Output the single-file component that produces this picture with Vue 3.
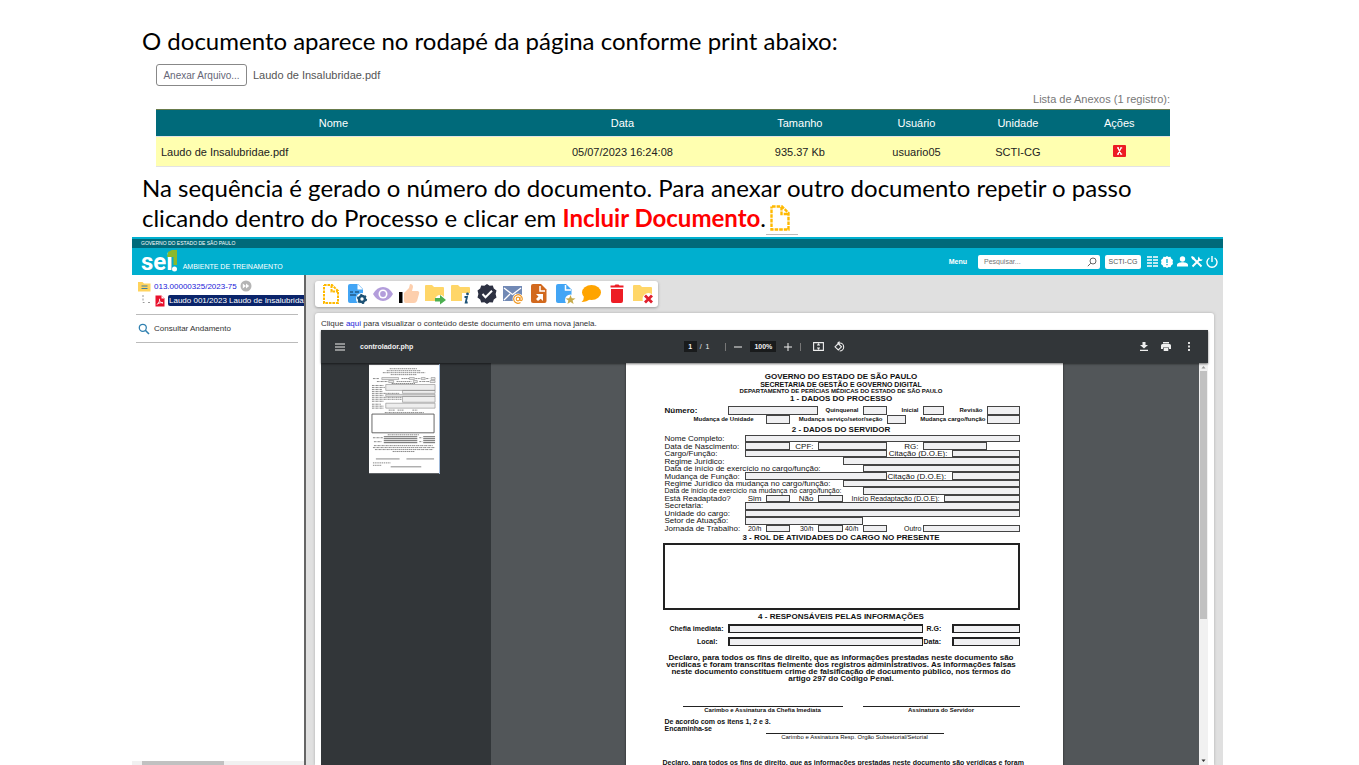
<script setup>
const columns = ['Nome', 'Data', 'Tamanho', 'Usuário', 'Unidade', 'Ações']

// Form cells: l = label, f = field; from/to are grid lines of the form sheet
const l = (text, from, to, cls = '') => ({ kind: 'l', text, from, to, cls })
const f = (name, from, to) => ({ kind: 'f', name, from, to })

const processRows = [
  [l('Número:', 1, 2, 'big'), f('Número', 2, 6), l('Quinquenal', 6, 8, 'end'), f('Quinquenal', 8, 9), l('Inicial', 9, 11, 'end'), f('Inicial', 11, 12), l('Revisão', 13, 14, 'end'), f('Revisão', 14, 15)],
  [l('Mudança de Unidade', 1, 4, 'end far'), f('Mudança de Unidade', 4, 5), l('Mudança serviço/setor/seção', 5, 9, 'end'), f('Mudança serviço/setor/seção', 9, 10), l('Mudança cargo/função', 10, 14, 'end tight'), f('Mudança cargo/função', 14, 15)],
]

const serverRows = [
  [l('Nome Completo:', 1, 3), f('Nome Completo', 3, 15)],
  [l('Data de Nascimento:', 1, 3), f('Data de Nascimento', 3, 5), l('CPF:', 5, 6, 'end'), f('CPF', 6, 9), l('RG:', 9, 11, 'end'), f('RG', 11, 14)],
  [l('Cargo/Função:', 1, 3), f('Cargo/Função', 3, 9), l('Citação (D.O.E):', 9, 13, 'end'), f('Citação do cargo', 13, 15)],
  [l('Regime Jurídico:', 1, 7), f('Regime Jurídico', 7, 15)],
  [l('Data de início de exercício no cargo/função:', 1, 8), f('Data de início de exercício', 8, 15)],
  [l('Mudança de Função:', 1, 3), f('Mudança de Função', 3, 9), l('Citação (D.O.E):', 9, 13, 'tight'), f('Citação da mudança', 13, 15)],
  [l('Regime Jurídico da mudança no cargo/função:', 1, 7), f('Regime Jurídico da mudança', 7, 15)],
  [l('Data de início de exercício na mudança no cargo/função:', 1, 8, 'small'), f('Data de início na mudança', 8, 15)],
  [l('Está Readaptado?', 1, 3), l('Sim', 3, 4, 'end'), f('Sim', 4, 5), l('Não', 5, 6, 'end'), f('Não', 6, 7), l('Início Readaptação (D.O.E):', 8, 12, 'end small'), f('Início Readaptação', 12, 15)],
  [l('Secretaria:', 1, 3), f('Secretaria', 3, 15)],
  [l('Unidade do cargo:', 1, 3), f('Unidade do cargo', 3, 15)],
  [l('Setor de Atuação:', 1, 3), f('Setor de Atuação', 3, 8)],
  [l('Jornada de Trabalho:', 1, 3), l('20/h', 3, 4, 'end small'), f('20 horas', 4, 5), l('30/h', 5, 6, 'end small'), f('30 horas', 6, 7), l('40/h', 7, 8, 'end small'), f('40 horas', 8, 9), l('Outro', 9, 11, 'end small tight'), f('Outro', 11, 15)],
]

const contactRows = [
  [l('Chefia imediata:', 1, 2, 'end'), f('Chefia imediata', 2, 11), l('R.G:', 11, 13, 'near'), f('R.G', 13, 15)],
  [l('Local:', 1, 2, 'end out'), f('Local', 2, 11), l('Data:', 11, 13, 'tight'), f('Data', 13, 15)],
]

const idOf = (group, row, cells, i) => {
  const cell = cells[i]
  const target = cell.kind === 'l' ? i + 1 : i
  return `${group}-${row}-${target}`
}
const span = (c) => ({ gridColumn: `${c.from} / ${c.to}` })

const groups = {
  process: processRows,
  server: serverRows,
  contact: contactRows,
}

// Text lines of the page thumbnail: x, y, length
const textLines = [
  [21, 4, 28], [18, 6, 34], [14, 8, 43], [22, 10, 26],
  [4, 14, 6], [33, 14, 8], [47, 14, 5], [58, 14, 3],
  [8, 17, 11], [28, 17, 15], [51, 17, 10], [23, 19, 24],
  [5, 82, 60], [4, 84, 63], [6, 86, 59], [24, 88, 22],
]
</script>

<template>
  <main class="slide">
    <p class="lead">O documento aparece no rodapé da página conforme print abaixo:</p>

    <section class="attachments">
      <div class="upload">
        <button type="button" class="attach">Anexar Arquivo...</button>
        <span>Laudo de Insalubridae.pdf</span>
      </div>
      <table>
        <caption>Lista de Anexos (1 registro):</caption>
        <thead>
          <tr><th v-for="c in columns" :key="c" scope="col">{{ c }}</th></tr>
        </thead>
        <tbody>
          <tr>
            <td>Laudo de Insalubridae.pdf</td>
            <td>05/07/2023 16:24:08</td>
            <td>935.37 Kb</td>
            <td>usuario05</td>
            <td>SCTI-CG</td>
            <td><button type="button" class="remove" aria-label="Remover anexo">
              <svg width="13" height="12" viewBox="0 0 13 12"><rect width="13" height="12" rx="1" fill="#ed1c24" /><path d="M4 2.800h2M7.200 2.800h2M4 9.200h2M7.200 9.200h2M5 3l3 6M8 3L5 9" stroke="#fff" stroke-width="1.200" fill="none" /></svg>
            </button></td>
          </tr>
        </tbody>
      </table>
    </section>

    <p class="lead second">Na sequência é gerado o número do documento. Para anexar outro documento repetir o passo<br>clicando dentro do Processo e clicar em <strong>Incluir Documento</strong>.<span class="inline-icon"><svg width="20" height="26" viewBox="0 0 20 26"><path d="M2 1.500h10l6.500 6.500v16.500H1.500V1.500M11.500 2v7h7" fill="none" stroke="#ffb900" stroke-width="2.400" stroke-dasharray="3.600 1" /></svg></span></p>

    <section class="app">
      <div class="gov">GOVERNO DO ESTADO DE SÃO PAULO</div>
      <header class="bar">
        <div class="logo">sei<svg width="10" height="24" viewBox="0 0 10 24"><path d="M1 3l2-1 2-1h5v15H6.500V8H0z" fill="#8bb82b" /><circle cx="7.500" cy="20" r="2.500" fill="#fff" /></svg></div>
        <span class="env">AMBIENTE DE TREINAMENTO</span>
        <nav class="tools">
          <a href="#" class="menu">Menu</a>
          <div class="search">
            <input type="search" placeholder="Pesquisar..." aria-label="Pesquisar">
            <svg width="10" height="10" viewBox="0 0 10 10"><circle cx="6" cy="4" r="3" fill="none" stroke="#666" /><path d="M3.800 6.200L.800 9.200" stroke="#666" /></svg>
          </div>
          <button type="button" class="unit">SCTI-CG</button>
          <button type="button" class="ico" aria-label="Painel"><svg width="11" height="11" viewBox="0 0 11 11"><path d="M0 1h5M6 1h5M0 4h5M6 4h5M0 7h5M6 7h5M0 10h5M6 10h5" stroke="#fff" stroke-width="1.300" /></svg></button>
          <button type="button" class="ico" aria-label="Novidades"><svg width="12" height="12" viewBox="0 0 12 12"><path d="M6 0l1.600 1 1.900-.2.700 1.800L12 4l-.4 2 .4 2-1.800 1.400-.7 1.800-1.900-.2L6 12l-1.600-1-1.900.2-.7-1.800L0 8l.4-2L0 4l1.800-1.400L2.500.8l1.900.2z" fill="#fff" /><path d="M6 3v4M6 8v1.200" stroke="#00afcf" stroke-width="1.300" /></svg></button>
          <button type="button" class="ico" aria-label="Usuário"><svg width="11" height="11" viewBox="0 0 11 11"><circle cx="5.500" cy="3" r="2.700" fill="#fff" /><path d="M0 10.500V9c0-2 3-2.800 5.500-2.800S11 7 11 9v1.500z" fill="#fff" /></svg></button>
          <button type="button" class="ico" aria-label="Configurações"><svg width="12" height="12" viewBox="0 0 12 12"><path d="M1.500 1.500L10.500 10.500M1.500 10.500L9 3" fill="none" stroke="#fff" stroke-width="1.900" /><path d="M0 1l1-1 2.500 1.500v2h-2zM8 .600c-1.300 1-1.200 2.300-.7 3.300L8.300 5c1.300.3 3 0 3.200-1.800L9.700 3.600 8.600 2.400z" fill="#fff" /></svg></button>
          <button type="button" class="ico" aria-label="Sair"><svg width="12" height="12" viewBox="0 0 12 12"><path d="M3.400 2a5 5 0 1 0 5.200 0M6 0v6" fill="none" stroke="#fff" stroke-width="1.400" /></svg></button>
        </nav>
      </header>

      <div class="body">
        <aside class="tree">
          <div class="node">
            <svg width="13" height="11" viewBox="0 0 13 11"><path d="M0 1h4.500l1.500 1.500h6.500V10.500H0z" fill="#ffd35c" /><path d="M3.500 5h6M3.500 7.500h6" stroke="#3f7f9f" stroke-width="1.200" /></svg>
            <a href="#">013.00000325/2023-75</a>
            <svg width="12" height="12" viewBox="0 0 12 12"><circle cx="6" cy="6" r="5.500" fill="#b5b5b5" /><path d="M2.800 3.500L6 6 2.800 8.500zM6 3.500L9.200 6 6 8.500z" fill="#fff" /></svg>
          </div>
          <div class="node child">
            <svg width="10" height="12" viewBox="0 0 10 12"><path d="M1 0v7.500h2M6 7.500h3" fill="none" stroke="#999" stroke-dasharray="2 1.500" /></svg>
            <svg width="10" height="12" viewBox="0 0 10 12"><path d="M.5.500h6L9.500 3.500v8H.5z" fill="#e8112d" /><path d="M6.500.500v3h3z" fill="#fff" /><path d="M2 9.500C4 8 5 5.500 4.500 3.800M4.600 5.500C5.200 7 6.500 8 8 8M2.500 9C4 7.800 6 7.400 8 7.800" fill="none" stroke="#fff" stroke-width=".9" /></svg>
            <a href="#" class="selected">Laudo 001/2023 Laudo de Insalubrida</a>
          </div>
          <a href="#" class="history">
            <svg width="12" height="12" viewBox="0 0 12 12"><circle cx="4.800" cy="4.800" r="3.500" fill="none" stroke="#3080b0" stroke-width="1.300" /><path d="M7.300 7.300L11 11" stroke="#3080b0" stroke-width="1.600" /></svg>
            Consultar Andamento
          </a>
          <div class="hscroll"><span></span></div>
        </aside>

        <div class="content">
          <div class="actions">
            <button type="button" aria-label="Incluir Documento"><svg viewBox="0 0 20 20"><path d="M3 1h8l6 6v12H3V1M10.500 1.500V7.500H17" fill="none" stroke="#ffb900" stroke-width="2" stroke-dasharray="2.600 .9" /></svg></button>
            <button type="button" aria-label="Alterar Documento"><svg viewBox="0 0 20 20"><path d="M1 2q0-2 2-2h8l5 5v14H3q-2 0-2-2z" fill="#42a5f5" /><path d="M10.500 0v5.500H16z" fill="#fff" /><path d="M3 8h3M8 8h4M3 11h6" stroke="#225b88" stroke-width="1.300" /><circle cx="15" cy="15" r="6" fill="#fff" /><circle cx="15" cy="15" r="3" fill="none" stroke="#1d5275" stroke-width="2.600" /><circle cx="15" cy="15" r="4.300" fill="none" stroke="#1d5275" stroke-width="1.600" stroke-dasharray="2 2.500" /></svg></button>
            <button type="button" aria-label="Acompanhamento"><svg viewBox="0 0 20 20"><path d="M0 10Q4 3 10 3T20 10Q16 17 10 17T0 10z" fill="#b39ddb" /><circle cx="10" cy="10" r="4.500" fill="#fff" /><circle cx="10" cy="10" r="2.900" fill="#b39ddb" /></svg></button>
            <button type="button" aria-label="Ciência"><svg viewBox="0 0 20 20"><path d="M0 8h3.500v11H0z" fill="#000" /><path d="M5 9l5-5 1-4q3 0 3 3l-1 4h6q2 1 1 3l-2 7q-1 2-3 2H7q-2 0-2-2z" fill="#fdcfad" /></svg></button>
            <button type="button" aria-label="Enviar Processo"><svg viewBox="0 0 20 20"><path d="M0 2q0-1 1-1h6l2 2h9q1 0 1 1v13H0z" fill="#ffd668" /><circle cx="15" cy="16" r="5" fill="#fff" /><path d="M10 14h5v-3l6 5-6 4.500v-3h-5z" fill="#4caf50" /></svg></button>
            <button type="button" aria-label="Informações"><svg viewBox="0 0 20 20"><path d="M0 2q0-1 1-1h6l2 2h9q1 0 1 1v13H0z" fill="#ffd668" /><path d="M11 9h9v11h-9z" fill="#fff" /><circle cx="16.500" cy="10" r="1.400" fill="#1d5275" /><path d="M13.500 13h2.500l-1.300 5.500h2" fill="none" stroke="#1d5275" stroke-width="1.800" /></svg></button>
            <button type="button" aria-label="Autenticar"><svg viewBox="0 0 20 20"><path d="M10 0l2.600 1.800 3.200-.3 1 3L19.500 6.400 18.600 10l.9 3.600-2.700 1.900-1 3-3.200-.3L10 20l-2.600-1.800-3.200.3-1-3L.5 13.600 1.400 10 .5 6.400l2.700-1.900 1-3 3.200.3z" fill="#2d3142" /><path d="M5.500 10l3 3.200 6.500-6.500" fill="none" stroke="#fff" stroke-width="2" /></svg></button>
            <button type="button" aria-label="Enviar por e-mail"><svg viewBox="0 0 20 20"><path d="M0 2h19v15H0z" fill="#7189b5" /><path d="M1 4l8.500 6.500L18 4M1 16l6-6M18 16l-6-6" fill="none" stroke="#fff" stroke-width="1.300" /><circle cx="15" cy="15" r="5.500" fill="#fff" /><path d="M17.500 18.500a4.300 4.300 0 1 1 1.800-3.500c0 2-2.300 2-2.300.5v-2.500" fill="none" stroke="#f09a28" stroke-width="1.200" /><circle cx="15" cy="15" r="1.800" fill="none" stroke="#f09a28" stroke-width="1.200" /></svg></button>
            <button type="button" aria-label="Mover Documento"><svg viewBox="0 0 20 20"><path d="M2 2q0-2 2-2h8l5.500 5.500V17q0 2-2 2H4q-2 0-2-2z" fill="#d2691e" /><path d="M11 2v5h5" fill="none" stroke="#fff" stroke-width="1.500" /><path d="M7 10h7v7l-2.300-2.300L9 17l-2-2 2.500-2.500z" fill="#fff" /></svg></button>
            <button type="button" aria-label="Favoritos"><svg viewBox="0 0 20 20"><path d="M1 2q0-2 2-2h8l5.500 5.500V19H3q-2 0-2-2z" fill="#42a5f5" /><path d="M10.500 1v5h5.500" fill="none" stroke="#fff" stroke-width="1.500" /><circle cx="15.500" cy="16" r="5.500" fill="#fff" /><path d="M15.500 11l1.300 3.300 3.700.1-2.900 2.200 1 3.400-3.100-2-3.100 2 1-3.400-2.900-2.200 3.700-.1z" fill="#c6ab4b" /></svg></button>
            <button type="button" aria-label="Comentários"><svg viewBox="0 0 20 20"><ellipse cx="10.500" cy="8.500" rx="9.500" ry="7.500" fill="#ffa400" /><path d="M3 12q0 4-2.500 6Q6 18 9 15z" fill="#ffa400" /></svg></button>
            <button type="button" aria-label="Excluir"><svg viewBox="0 0 20 20"><path d="M4 5h12v12q0 2-2 2H6q-2 0-2-2zM3.500 1.500h4L8.500.500h3l1 1h4v2h-13z" fill="#ed1c24" /></svg></button>
            <button type="button" aria-label="Cancelar Documento"><svg viewBox="0 0 20 20"><path d="M0 2q0-1 1-1h6l2 2h9q1 0 1 1v13H0z" fill="#ffd668" /><circle cx="15.500" cy="15" r="6" fill="#fff" /><path d="M12 11.500l7 7M19 11.500l-7 7" stroke="#e01f2d" stroke-width="2.800" /></svg></button>
          </div>

          <div class="card">
            <p class="hint">Clique <a href="#">aqui</a> para visualizar o conteúdo deste documento em uma nova janela.</p>
            <div class="viewer">
              <div class="vbar">
                <div class="vleft">
                  <button type="button" class="vico" aria-label="Menu lateral"><svg width="10" height="8" viewBox="0 0 10 8"><path d="M0 1h10M0 4h10M0 7h10" stroke="#eee" stroke-width="1.200" /></svg></button>
                  <span>controlador.php</span>
                </div>
                <div class="vmid">
                  <input class="pg" value="1" aria-label="Página"><span class="total">/&nbsp; 1</span>
                  <i></i>
                  <button type="button" class="vico" aria-label="Diminuir zoom"><svg width="8" height="8" viewBox="0 0 8 8"><path d="M0 4h8" stroke="#eee" /></svg></button>
                  <input class="zoom" value="100%" aria-label="Zoom">
                  <button type="button" class="vico" aria-label="Aumentar zoom"><svg width="8" height="8" viewBox="0 0 8 8"><path d="M0 4h8M4 0v8" stroke="#eee" /></svg></button>
                  <i></i>
                  <button type="button" class="vico fit" aria-label="Ajustar à página"><svg width="11" height="9" viewBox="0 0 11 9"><path d="M.6.600h9.800v7.800H.6zM5.500 1.500v2M5.500 5.500v2M4 3h3M4 6h3" fill="none" stroke="#eee" stroke-width="1.100" /></svg></button>
                  <button type="button" class="vico" aria-label="Girar"><svg width="11" height="11" viewBox="0 0 11 11"><path d="M1 5.800L4.300 2.600l3.200 3.200L4.300 9zM4.500 2h1.200a4 4 0 0 1 0 8" fill="none" stroke="#eee" stroke-width="1.100" /><path d="M5.500 0v4L3 2z" fill="#eee" /></svg></button>
                </div>
                <div class="vright">
                  <button type="button" class="vico" aria-label="Baixar"><svg width="8" height="9" viewBox="0 0 8 9"><path d="M2.500 0h3v3H8L4 6.500 0 3h2.500zM0 7.700h8V9H0z" fill="#eee" /></svg></button>
                  <button type="button" class="vico" aria-label="Imprimir"><svg width="10" height="9" viewBox="0 0 10 9"><path d="M2 0h6v1.500H2zM1.500 2h7Q10 2 10 3.500V7H8V5.500H2V7H0V3.500Q0 2 1.500 2zM2.700 6h4.600v3H2.700z" fill="#eee" /></svg></button>
                  <button type="button" class="vico" aria-label="Mais ações"><svg width="10" height="9" viewBox="0 0 10 9"><path d="M4 0h2v2H4zM4 3.500h2v2H4zM4 7h2v2H4z" fill="#ddd" /></svg></button>
                </div>
              </div>

              <div class="vbody">
                <div class="thumbs">
                  <svg class="thumb" viewBox="0 0 71 110">
                    <rect width="71" height="110" fill="#fff" />
                    <path v-for="(t, i) in textLines" :key="i" :d="`M${t[0]} ${t[1]}h${t[2]}`" stroke="#888" stroke-width="1" stroke-dasharray="2 .6 1 .4" />
                    <g fill="#eee" stroke="#888" stroke-width=".6">
                      <path d="M13 13h17v2H13zM41 13h5v2h-5zM53 13h4v2h-4zM63 13h4v2h-4zM20 16h5v2h-5zM45 16h4v2h-4zM62 16h5v2h-5zM17 20h50v6H17zM34 26h33v3H34zM17 30h50v2H17zM34 32h33v6H34zM17 39h50v5H17z" />
                    </g>
                    <path d="M3 21h12M3 23h13M3 25h10M3 27h11M3 29h28M3 31h12M3 33h30M3 35h30M3 37h12M3 40h9M3 42h12M3 44h12M20 46h6M29 46h6M44 46h5M16 48.500h40M19 71h32M4 74h10M5 78h8M51 74h3M51 78h3" stroke="#888" stroke-dasharray="2 .6 1 .4" />
                    <path d="M3 50h63v19H3zM15 73h34M15 75h34M15 77h34M15 79h34M55 73h12M55 75h12M55 77h12M55 79h12" fill="none" stroke="#555" stroke-width=".9" />
                    <path d="M7 95.500h24M38 95.500h28M22 103.500h31" stroke="#888" />
                    <path d="M4 99.500h18M4 102h9" stroke="#888" stroke-dasharray="1.500 .7" />
                  </svg>
                </div>
                <div class="canvas">
                  <article class="sheet">
                    <h2 class="h8">GOVERNO DO ESTADO DE SÃO PAULO</h2>
                    <h3>SECRETARIA DE GESTÃO E GOVERNO DIGITAL</h3>
                    <h3 class="dept">DEPARTAMENTO DE PERÍCIAS MÉDICAS DO ESTADO DE SÃO PAULO</h3>
                    <h2 class="h8">1 - DADOS DO PROCESSO</h2>

                    <template v-for="(rows, name) in groups" :key="name">
                      <h2 v-if="name === 'server'" class="h11">2 - DADOS DO SERVIDOR</h2>
                      <template v-if="name === 'contact'">
                        <h2 class="h11">3 - ROL DE ATIVIDADES DO CARGO NO PRESENTE</h2>
                        <textarea aria-label="Rol de atividades do cargo no presente"></textarea>
                        <h2 class="h14">4 - RESPONSÁVEIS PELAS INFORMAÇÕES</h2>
                      </template>
                      <div class="rows" :class="name">
                        <div v-for="(cells, r) in rows" :key="r" class="row">
                          <template v-for="(c, i) in cells" :key="i">
                            <label v-if="c.kind === 'l'" :class="c.cls" :style="span(c)" :for="idOf(name, r, cells, i)">{{ c.text }}</label>
                            <input v-else :id="idOf(name, r, cells, i)" :aria-label="c.name" :style="span(c)">
                          </template>
                        </div>
                      </div>
                    </template>

                    <p class="oath">Declaro, para todos os fins de direito, que as informações prestadas neste documento são<br>verídicas e foram transcritas fielmente dos registros administrativos. As informações falsas<br>neste documento constituem crime de falsificação de documento público, nos termos do<br>artigo 297 do Código Penal.</p>

                    <div class="row signs">
                      <div class="sign chief">Carimbo e Assinatura da Chefia Imediata</div>
                      <div class="sign server-sign">Assinatura do Servidor</div>
                    </div>
                    <div class="row agree">
                      <p>De acordo com os itens 1, 2 e 3.<br>Encaminha-se</p>
                      <div class="sign organ">Carimbo e Assinatura Resp. Orgão Subsetorial/Setorial</div>
                    </div>
                    <p class="tail">Declaro, para todos os fins de direito, que as informações prestadas neste documento são verídicas e foram</p>
                  </article>
                </div>
                <div class="vscroll">
                  <svg width="9" height="8" viewBox="0 0 9 8"><path d="M2.500 5.500L4.500 3l2 2.500z" fill="#999" /></svg>
                  <span></span>
                  <svg width="9" height="8" viewBox="0 0 9 8"><path d="M2.500 2.500L4.500 5l2-2.500z" fill="#333" /></svg>
                </div>
              </div>
            </div>
          </div>
        </div>
      </div>
    </section>
  </main>
</template>

<style>
body { margin: 0; background: #fff; overflow: hidden; }
</style>

<style scoped>
* { box-sizing: border-box; }
p, h2, h3 { margin: 0; }
a { text-decoration: none; color: inherit; }
button { font: inherit; color: inherit; background: none; border: 0; padding: 0; margin: 0; cursor: pointer; }
input, textarea { font: inherit; color: inherit; margin: 0; padding: 0; border-radius: 0; min-width: 0; }
svg { display: block; flex: none; }

.slide {
  height: 100vh;
  overflow: hidden;
  display: flex;
  flex-direction: column;
  padding: 26px 136px 0 132px;
  font-family: "Liberation Sans", Arial, sans-serif;
}
.lead {
  padding-left: 10px;
  font: 24px/30px Lato, sans-serif;
  font-variant-ligatures: none;
  color: #000;
  white-space: nowrap;
}
.lead strong { color: #f00; }
.second { margin-top: 6px; }
.inline-icon {
  display: inline-block;
  vertical-align: top;
  height: 32px;
  padding: 2px 8px 0 4px;
  margin-bottom: -2px;
  border-bottom: 1px solid #bbb;
}

.attachments { padding: 8px 53px 0 24px; font-size: 11px; color: #555; }
.upload { display: flex; align-items: center; gap: 6px; height: 22px; }
.attach { width: 91px; height: 22px; border: 1px solid #888; border-radius: 3px; font-size: 10px; color: #667; background: #fff; }
table { width: 100%; border-collapse: collapse; table-layout: fixed; margin-top: 7px; color: #222; }
caption { text-align: right; height: 16px; line-height: 13px; color: #777; white-space: nowrap; }
thead { border-top: 1px solid #687b4c; }
th { height: 27px; padding: 0; background: #006a7a; color: #fff; font-weight: 400; border-bottom: 1px solid #e3e3e3; }
th:nth-child(1) { width: 35%; }
th:nth-child(2) { width: 22%; }
th:nth-child(3) { width: 13%; }
td { height: 30px; padding: 0; text-align: center; background: #ffffb0; border-bottom: 1px solid #e3e3e3; }
td:first-child { text-align: left; padding-left: 5px; }
.remove { display: block; margin: 0 auto 2px; }

.app { flex: 1; min-height: 0; display: flex; flex-direction: column; margin-top: 4px; border-top: 2px solid #00afcf; }
.gov { flex: none; height: 9px; padding-left: 9px; background: #006a7a; color: #fff; font-size: 5px; line-height: 9px; }
.bar { flex: none; height: 27px; display: flex; align-items: center; padding: 0 5px 0 9px; background: #00afcf; color: #fff; }
.logo { display: flex; align-items: center; height: 27px; font: 700 24px/24px Roboto, sans-serif; }
.logo svg { margin: 0 0 2px -6px; }
.env { margin: 10px 0 0 6px; font-size: 7px; }
.tools { margin-left: auto; display: flex; align-items: center; gap: 3px; }
.menu { margin-right: 8px; font-size: 7px; font-weight: 700; }
.search { display: flex; align-items: center; width: 122px; height: 14px; padding: 0 3px 0 6px; border-radius: 2px; background: #fff; }
.search input { flex: 1; border: 0; outline: 0; background: none; font-size: 7px; color: #666; -webkit-appearance: none; appearance: none; }
.unit { width: 36px; height: 14px; margin: 0 2px; border-radius: 2px; background: #fff; color: #555; font-size: 7px; }
.ico { width: 12px; display: flex; justify-content: center; }

.body { flex: 1; min-height: 0; display: flex; background: #e0e0e0; }
.tree { position: relative; flex: none; width: 174px; padding: 4px 3px 0 4px; background: #fff; border-right: 2px solid #666; font-size: 8px; color: #333; }
.node { display: flex; align-items: center; gap: 3px; height: 14px; padding-left: 2px; white-space: nowrap; color: #1818d8; }
.node.child { height: 15px; margin-right: -3px; padding-left: 6px; gap: 3px; }
.child a { flex: 1; height: 11px; line-height: 11px; padding-left: 1px; border-radius: 2px 0 0 2px; background: #0a246a; color: #fff; }
.history { display: flex; align-items: center; gap: 4px; height: 29px; margin: 6px 3px 0 0; padding-left: 2px; border: solid #bbb; border-width: 1px 0; }
.hscroll { position: absolute; left: 0; right: 0; bottom: 0; height: 4px; padding: 0 80px 0 10px; background: #f1f1f1; }
.hscroll span { display: block; height: 4px; background: #c1c1c1; }

.content { flex: 1; min-width: 0; display: flex; flex-direction: column; align-items: flex-start; gap: 6px; padding: 6px 9px 0; }
.actions { flex: none; display: flex; gap: 6px; height: 26px; padding: 3px 5px 3px 6px; border-radius: 3px; background: #fff; box-shadow: 0 1px 3px #999; }
.actions button, .actions svg { width: 20px; height: 20px; }
.actions svg { overflow: visible; }
.card { flex: 1; min-height: 0; width: 100%; display: flex; flex-direction: column; padding: 4px 6px 0; border-radius: 3px 3px 0 0; background: #fff; box-shadow: 0 0 3px #aaa; }
.hint { flex: none; height: 13px; line-height: 13px; font-size: 8px; color: #333; }
.hint a { color: #2424d8; }

.viewer { flex: 1; min-height: 0; display: flex; flex-direction: column; background: #525659; color: #f1f1f1; }
.vbar { flex: none; height: 33px; display: grid; grid-template-columns: 1fr auto 1fr; align-items: center; padding: 0 14px; background: #323639; font: 700 7px/12px "Liberation Sans", Arial, sans-serif; box-shadow: 0 1px 2px #0008; z-index: 1; }
.vleft { display: flex; align-items: center; gap: 15px; }
.vmid { display: flex; align-items: center; gap: 8px; }
.vmid input { height: 11px; border: 0; text-align: center; background: #191b1c; }
.vmid i { width: 1px; height: 8px; background: #777; }
.pg { width: 13px; }
.zoom { width: 26px; }
.total { margin: 0 8px 0 -5px; font-weight: 400; }
.fit { margin: 0 2px 0 4px; }
.vright { display: flex; justify-content: flex-end; gap: 13px; }

.vbody { flex: 1; min-height: 0; display: flex; }
.thumbs { flex: none; width: 170px; padding: 1px 0 0 48px; background: #323639; }
.thumb { width: 71px; height: 110px; border-right: 1px solid #9fb8d8; }
.canvas { flex: 1; min-width: 0; display: flex; justify-content: center; align-items: flex-start; padding-right: 2px; }
.vscroll { flex: none; width: 9px; display: flex; flex-direction: column; background: #f1f1f1; }
.vscroll span { width: 7px; height: 248px; margin: 0 1px auto; background: #c1c1c1; }

.sheet { width: 437px; padding: 10px 43px 0 37px; background: #fff; color: #111; font-size: 8px; box-shadow: 0 0 2px #222; }
h2 { text-align: center; font-size: 8px; font-weight: 700; white-space: nowrap; }
h3 { text-align: center; font-size: 7px; line-height: 7px; font-weight: 700; white-space: nowrap; }
.dept { font-size: 6px; }
.h8 { line-height: 8px; }
.h11 { line-height: 11px; }
.h14 { line-height: 14px; }
.rows { display: grid; }
.row { display: grid; grid-template-columns: 65fr 17fr 21fr 24fr 28fr 25fr 20fr 24fr 19fr 17fr 21fr 8fr 35fr 33fr; min-height: 0; }
.row > * { min-width: 0; grid-row: 1; }
.rows input { width: 100%; height: 100%; min-height: 0; border: 1px solid #444; background: #f0f0f2; outline: 0; }
label { display: flex; align-items: center; min-height: 0; padding-left: 2px; white-space: nowrap; line-height: 7px; }
label.end { justify-content: flex-end; padding: 0 4px 0 0; }
label.far { padding-right: 12px; }
label.out { padding-right: 10px; }
label.near { padding-left: 4px; }
label.tight { padding: 0 1px; }
label.small { font-size: 7px; }
.process { margin-top: 3px; height: 18px; grid-template-rows: 9px 9px; font-size: 6px; font-weight: 700; }
.process .big { font-size: 8px; }
.server { height: 97px; grid-template-rows: repeat(13, 1fr); }
.contact { grid-template-rows: 9px 9px; gap: 4px; font-size: 7px; font-weight: 700; }
.contact input { border-width: 2px 1px 1px 2px; border-color: #222; }
textarea { display: block; width: 100%; height: 67px; resize: none; border: 2px solid #222; background: #fff; outline: 0; }
.oath { display: flex; flex-direction: column; margin-top: 8px; text-align: center; font-size: 8px; line-height: 7px; font-weight: 700; white-space: nowrap; }
.oath { display: block; }
.sign { border-top: 1px solid #222; text-align: center; font-size: 6px; line-height: 6px; font-weight: 700; white-space: nowrap; }
.signs { margin-top: 24px; }
.chief { grid-column: 1 / 7; margin-left: 20px; }
.server-sign { grid-column: 8 / 15; }
.agree { margin-top: 5px; }
.agree p { grid-column: 1 / 4; padding-left: 2px; font-size: 7px; line-height: 7px; font-weight: 700; white-space: nowrap; }
.organ { grid-column: 4 / 12; margin-top: 15px; font-weight: 400; }
.tail { margin-top: 18px; font-size: 7px; line-height: 9px; font-weight: 700; white-space: nowrap; }
</style>
